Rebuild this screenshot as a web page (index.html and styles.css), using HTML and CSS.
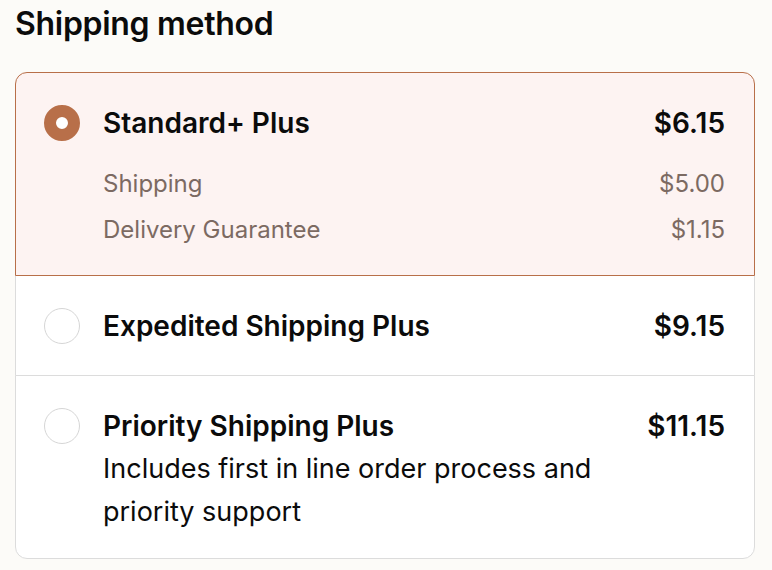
FILE: index.html
```html
<!DOCTYPE html>
<html lang="en">

<head>
    <meta charset="UTF-8">
    <meta name="viewport" content="width=device-width, initial-scale=1.0">
    <title>Shipping method</title>
    <link rel="stylesheet" href="styles.css">
</head>

<body>
    <section class="shipping">
        <h2 class="shipping-title">Shipping method</h2>
        <div class="options">
            <label class="option selected">
                <span class="radio"></span>
                <div class="option-body">
                    <div class="option-head">
                        <span class="option-name">Standard+ Plus</span>
                        <span class="option-price">$6.15</span>
                    </div>
                    <div class="breakdown">
                        <div class="breakdown-row">
                            <span>Shipping</span>
                            <span>$5.00</span>
                        </div>
                        <div class="breakdown-row">
                            <span>Delivery Guarantee</span>
                            <span>$1.15</span>
                        </div>
                    </div>
                </div>
            </label>
            <label class="option">
                <span class="radio"></span>
                <div class="option-body">
                    <div class="option-head">
                        <span class="option-name">Expedited Shipping Plus</span>
                        <span class="option-price">$9.15</span>
                    </div>
                </div>
            </label>
            <label class="option">
                <span class="radio"></span>
                <div class="option-body">
                    <div class="option-head">
                        <span class="option-name">Priority Shipping Plus</span>
                        <span class="option-price">$11.15</span>
                    </div>
                    <p class="option-desc">Includes first in line order process and priority support</p>
                </div>
            </label>
        </div>
    </section>
</body>

</html>
```

FILE: styles.css
```css
/* Shipping method picker, warm off-white page with a terracotta accent */

html,
body {
    margin: 0;
    padding: 0;
    background-color: #fcfbf8;
    color: #0b0b0b;
    font-family: 'Inter', 'Noto Sans', sans-serif;
}

.shipping {
    padding: 4px 17px 10px 15px;
}

.shipping-title {
    margin: 0 0 28px;
    font-size: 32px;
    font-weight: 600;
    line-height: 40px;
    letter-spacing: -0.3px;
}

.options {
    display: flex;
    flex-direction: column;
}

.option {
    display: flex;
    align-items: flex-start;
    gap: 23px;
    padding: 32px 29px 31px 28px;
    background-color: #ffffff;
    border: 1px solid #dcdcdc;
    margin-top: -1px;
}

.option:first-child {
    margin-top: 0;
    border-radius: 12px 12px 0 0;
}

.option:last-child {
    border-radius: 0 0 12px 12px;
    padding-bottom: 25px;
}

/* Selected row sits above its neighbours so its border wins */
.option.selected {
    position: relative;
    z-index: 1;
    background-color: #fdf3f2;
    border-color: #b86f49;
    padding-bottom: 22px;
}

.radio {
    flex: none;
    width: 34px;
    height: 34px;
    border: 1px solid #d6d6d6;
    border-radius: 50%;
    background-color: #ffffff;
    box-sizing: content-box;
}

.selected .radio {
    width: 12px;
    height: 12px;
    border: 12px solid #b86f49;
}

.option-body {
    flex: 1;
}

.option-head {
    display: flex;
    justify-content: space-between;
    align-items: center;
    height: 36px;
    font-size: 28px;
    font-weight: 600;
}

.breakdown {
    margin-top: 20px;
}

.breakdown-row {
    display: flex;
    justify-content: space-between;
    font-size: 24px;
    line-height: 46px;
    color: #7c6a62;
}

.option-desc {
    margin: 3px 0 0;
    font-size: 27px;
    line-height: 43px;
    width: 530px;
}
```
